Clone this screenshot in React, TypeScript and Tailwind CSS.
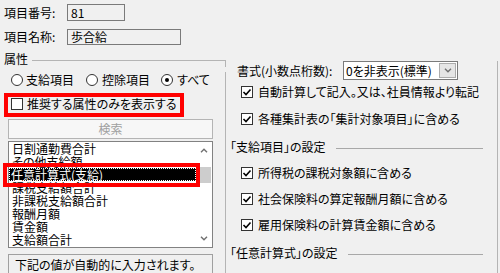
const listItems = [
  '日割通勤費合計',
  'その他支給額',
  '任意計算式(支給)',
  '課税支給額合計',
  '非課税支給額合計',
  '報酬月額',
  '賃金額',
  '支給額合計',
  '通勤手当合計',
];

function Check({ checked }: { checked?: boolean }) {
  return (
    <span className="w-[12px] h-[12px] shrink-0 border border-[#333] bg-white flex items-center justify-center">
      {checked && (
        <svg width="10" height="10" viewBox="0 0 10 10">
          <path d="M1.5 5 L4 7.5 L8.5 2.5" stroke="#000" strokeWidth="1.6" fill="none" />
        </svg>
      )}
    </span>
  );
}

function Radio({ on }: { on?: boolean }) {
  return (
    <span className="w-[12px] h-[12px] shrink-0 rounded-full border border-[#333] bg-white flex items-center justify-center">
      {on && <span className="w-[4px] h-[4px] rounded-full bg-black" />}
    </span>
  );
}

function Chevron({ down }: { down?: boolean }) {
  return (
    <svg width="8" height="5" viewBox="0 0 8 5">
      <path
        d={down ? 'M1 0.8 L4 3.8 L7 0.8' : 'M1 4.2 L4 1.2 L7 4.2'}
        stroke="#707070"
        strokeWidth="1.4"
        fill="none"
      />
    </svg>
  );
}

function CheckRow({ label, className = '' }: { label: string; className?: string }) {
  return (
    <div className={`flex items-center h-[16px] pl-[4px] gap-[5px] whitespace-nowrap ${className}`}>
      <Check checked />
      <span>{label}</span>
    </div>
  );
}

function Heading({ label, className = '' }: { label: string; className?: string }) {
  return (
    <div className={`flex h-[16px] -ml-[7px] mr-[14px] ${className}`}>
      <span className="whitespace-nowrap">{label}</span>
      <div className="flex-1 ml-[10px] mt-[9px] h-px bg-[#a8a8a8]" />
    </div>
  );
}

export default function App() {
  return (
    <div className="relative w-[500px] h-[273px] overflow-hidden bg-[#f0f0f0] text-black font-['Noto_Sans_CJK_JP',sans-serif] text-[12px] leading-[16px] [font-feature-settings:'palt']">
      <div className="pl-[4px] pt-[4px]">
        <div className="flex items-center h-[17px]">
          <span className="w-[63px]">項目番号:</span>
          <div className="w-[58px] h-[17px] border border-[#7a7a7a] pl-[3px] leading-[15px]">81</div>
        </div>
        <div className="flex items-center h-[16px] mt-[8px]">
          <span className="w-[63px]">項目名称:</span>
          <div className="w-[114px] h-[16px] border border-[#7a7a7a] pl-[3px] leading-[14px]">歩合給</div>
        </div>
      </div>

      <div className="flex mt-[6px]">
        {/* left: 属性 */}
        <div className="w-[226px] shrink-0">
          <div className="flex h-[16px]">
            <span className="pl-[4px]">属性</span>
            <div className="flex-1 ml-[4px] mt-[9px] h-[7px] border-t border-r border-[#b4b4b4]" />
          </div>
          <div className="h-[220px] border-r border-[#b4b4b4] pl-[8px]">
            <div className="flex items-center h-[16px] mt-[5px] pl-[3px] whitespace-nowrap">
              <Radio />
              <span className="ml-[3px]">支給項目</span>
              <span className="ml-[12px]"><Radio /></span>
              <span className="ml-[4px]">控除項目</span>
              <span className="ml-[11px]"><Radio on /></span>
              <span className="ml-[4px]">すべて</span>
            </div>
            <div className="flex items-center h-[16px] mt-[8px] pl-[3px] gap-[4px]">
              <Check />
              <span>推奨する属性のみを表示する</span>
            </div>
            <div className="mt-[7px] w-[205px] h-[20px] border border-[#b4b4b4] bg-[#f7f7f7] text-[#a0a0a0] flex items-center justify-center">
              検索
            </div>
            <div className="mt-[2px] w-[205px] h-[107px] border border-[#828282] bg-white flex">
              <div className="flex-1 overflow-hidden">
                {listItems.map((item, i) => (
                  <div
                    key={item}
                    className={`h-[13px] leading-[13px] whitespace-nowrap ${
                      i === 2
                        ? 'bg-black text-white pl-[2px] outline-1 outline-dotted outline-white -outline-offset-1'
                        : 'pl-[3px]'
                    }`}
                  >
                    {item}
                  </div>
                ))}
              </div>
              <div className="w-[16px] flex flex-col">
                <div className="h-[17px] flex items-center justify-center">
                  <Chevron />
                </div>
                <div className="mt-[8px] h-[16px] mx-[1px] bg-[#cdcdcd]" />
                <div className="flex-1" />
                <div className="h-[17px] flex items-center justify-center">
                  <Chevron down />
                </div>
              </div>
            </div>
            <div className="mt-[6px] w-[205px] h-[24px] border border-[#a0a0a0] pl-[6px] pt-[3px] leading-[14px] whitespace-nowrap">
              下記の値が自動的に入力されます。
            </div>
          </div>
        </div>

        {/* right: settings */}
        <div className="flex-1">
          <div className="mt-[10px] w-[272px] h-[220px] border-r border-[#b4b4b4] pl-[11px]">
            <div className="mt-[9px] flex items-center h-[19px]">
              <span className="w-[106px] whitespace-nowrap">書式(小数点桁数):</span>
              <div className="w-[115px] h-[19px] border border-[#7a7a7a] bg-white flex items-center justify-between">
                <span className="pl-[2px] whitespace-nowrap">0を非表示(標準)</span>
                <span className="w-[17px] h-[15px] mr-[1px] bg-[#e5e5e5] border border-[#acacac] flex items-center justify-center">
                  <Chevron down />
                </span>
              </div>
            </div>
            <CheckRow className="mt-[4px]" label="自動計算して記入。又は、社員情報より転記" />
            <CheckRow className="mt-[11px]" label="各種集計表の「集計対象項目」に含める" />
            <Heading className="mt-[12px]" label="「支給項目」の設定" />
            <CheckRow className="mt-[10px]" label="所得税の課税対象額に含める" />
            <CheckRow className="mt-[10px]" label="社会保険料の算定報酬月額に含める" />
            <CheckRow className="mt-[10px]" label="雇用保険料の計算賃金額に含める" />
            <Heading className="mt-[12px]" label="「任意計算式」の設定" />
          </div>
        </div>
      </div>

      {/* red annotation boxes */}
      <div className="absolute left-[4px] top-[93px] w-[180px] h-[24px] border-4 border-[#ff0000]" />
      <div className="absolute left-[3px] top-[163px] w-[197px] h-[24px] border-4 border-[#ff0000]" />
    </div>
  );
}
